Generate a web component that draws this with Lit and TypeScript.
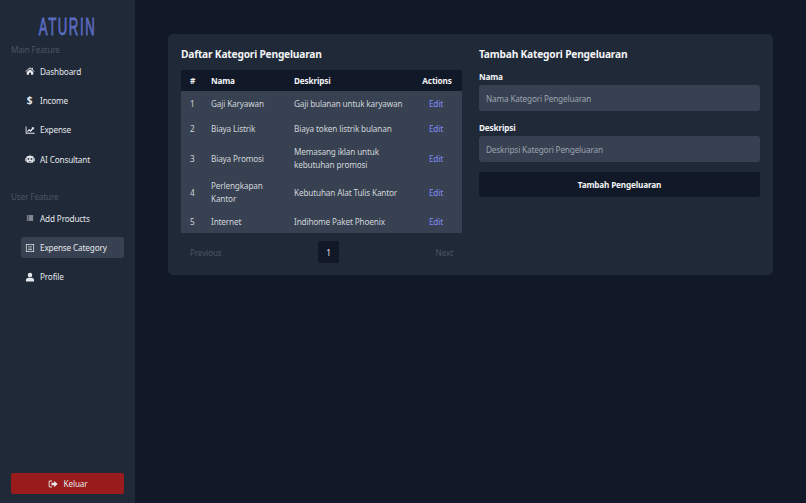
import { LitElement, html, css, svg } from "lit";
import { customElement } from "lit/decorators.js";

const icons: Record<string, any> = {
  home: svg`<path d="M8 2 .6 8.200l.8.9L8 3.600l6.600 5.500.8-.9-2.900-2.400V2.600h-1.800v1.700L8 2Z"/><path d="M2.800 9.600 8 5.300l5.200 4.300V14H9.600v-3.300H6.400V14H2.800V9.600Z"/>`,
  chart: svg`<path d="M1 2.500h1.500v10H15.500V14H1V2.500Z"/><path d="M3.800 9.500 6.400 6.300l2.200 1.800 2.800-3.300-1.100-1.100H14.500v3.800l-1.200-1.200-4.400 4.800-2.300-1.900-1.800 2.100H3.800V9.500Z"/>`,
  robot: svg`<path d="M7.300 1.200h1.400v2h2.600A2.700 2.700 0 0 1 14 5.900v5.400A2.700 2.700 0 0 1 11.300 14H4.700A2.700 2.700 0 0 1 2 11.300V5.900a2.700 2.700 0 0 1 2.700-2.700h2.600v-2ZM5.600 6.500a1.400 1.400 0 1 0 0 2.800 1.400 1.400 0 0 0 0-2.800Zm4.800 0a1.400 1.400 0 1 0 0 2.800 1.400 1.400 0 0 0 0-2.800ZM5.500 11v1h5v-1h-5Z"/><path d="M.3 6.800H1.500v4.700H.3zM14.500 6.800h1.200v4.700h-1.200z"/>`,
  list: svg`<path d="M3 4h1.600v1.600H3zM5.600 4H13v1.600H5.600zM3 7.200h1.600v1.600H3zM5.600 7.200H13v1.600H5.600zM3 10.400h1.600V12H3zM5.600 10.400H13V12H5.600z"/>`,
  book: svg`<path fill-rule="evenodd" d="M1.500 1.500h13v13h-13v-13Zm1.200 1.200v10.600h10.600V2.700H2.700Z"/><path d="M5 5h6v1H5zM5 7.500h6v1H5zM5 10h6v1H5z"/>`,
  user: svg`<circle cx="8" cy="4.600" r="3.600"/><path d="M1.500 15v-2.200C1.500 10.400 3.400 9 5.500 9h5c2.100 0 4 1.400 4 3.800V15h-13Z"/>`,
  out: svg`<path d="M6.500 2.500H3.300A2.300 2.300 0 0 0 1 4.800v6.400a2.300 2.300 0 0 0 2.300 2.300h3.200v-1.500H3.300a.8.8 0 0 1-.8-.8V4.800c0-.44.36-.8.8-.8h3.200V2.500Z"/><path d="M9.800 3 15.500 8l-5.700 5v-3H5.500V6h4.300V3Z"/>`,
};

const ico = (n: string) => html`<svg class="ico" viewBox="0 0 16 16" fill="currentColor">${icons[n]}</svg>`;

const rows = [
  ["1", "Gaji Karyawan", "Gaji bulanan untuk karyawan"],
  ["2", "Biaya Listrik", "Biaya token listrik bulanan"],
  ["3", "Biaya Promosi", "Memasang iklan untuk kebutuhan promosi"],
  ["4", "Perlengkapan Kantor", "Kebutuhan Alat Tulis Kantor"],
  ["5", "Internet", "Indihome Paket Phoenix"],
];

@customElement("app-root")
export class AppRoot extends LitElement {
  static styles = css`
    :host {
      display: flex;
      width: 806px;
      height: 503px;
      background: #111827;
      color: #e5e7eb;
      font-family: "Noto Sans", sans-serif;
      font-size: 8.200px;
      letter-spacing: -0.150px;
      overflow: hidden;
    }
    .side {
      width: 135px;
      flex: none;
      background: #1f2937;
      display: flex;
      flex-direction: column;
      box-sizing: border-box;
      padding: 14px 11px 9px;
    }
    .logo {
      font-family: "Liberation Sans", sans-serif;
      font-size: 23.500px;
      font-weight: 400;
      line-height: 26px;
      letter-spacing: 2.800px;
      color: #5c6bc0;
      text-align: center;
      transform: scaleX(0.56);
      -webkit-text-stroke: 0.8px #5c6bc0;
    }
    .sec { color: #4b5563; line-height: 13px; margin-top: 3px; }
    .sec.two { margin-top: 21px; }
    nav { display: flex; flex-direction: column; gap: 9px; margin: 5px 0 0 10px; }
    .sec.two + nav { margin-top: 5px; }
    .item {
      display: flex;
      align-items: center;
      gap: 5px;
      height: 20.300px;
      padding-left: 3px;
      border-radius: 2px;
      color: #e5e7eb;
    }
    .item.on { background: #374151; }
    .ico { width: 10px; height: 10px; flex: none; }
    .icw { width: 11px; display: flex; justify-content: center; flex: none; }
    .dollar { font-weight: 700; font-size: 10px; line-height: 10px; }
    .logout {
      margin-top: auto;
      height: 21px;
      background: #991b1b;
      border-radius: 2px;
      display: flex;
      align-items: center;
      justify-content: center;
      gap: 6px;
      color: #e5e7eb;
    }
    main { flex: 1; padding: 34px 33px 0; min-width: 0; }
    .card {
      width: 605px;
      height: 241px;
      box-sizing: border-box;
      background: #1f2937;
      border-radius: 5px;
      padding: 13px;
      display: grid;
      grid-template-columns: 281px 281px;
      column-gap: 17px;
    }
    h2 {
      margin: 0;
      font-size: 10.200px;
      letter-spacing: -0.200px;
      line-height: 15px;
      font-weight: 700;
      color: #f3f4f6;
    }
    .tbl {
      margin-top: 8px;
      display: grid;
      grid-template-columns: 30px 83px 1fr 52px;
      grid-template-rows: 21px 25px 25px 34px 34px 24px;
      background: #374151;
      line-height: 13px;
    }
    .h { background: #111827; display: flex; align-items: center; font-weight: 700; color: #f3f4f6; }
    .c { display: flex; align-items: center; color: #d1d5db; }
    .c.pad { padding-right: 6px; }
    .p1 { padding-left: 9px; }
    .c.n { padding-right: 10px; }
    .act { justify-content: center; color: #818cf8; }
    .hact { justify-content: center; padding-left: 2px; }
    .pager {
      display: flex;
      justify-content: space-between;
      align-items: center;
      margin-top: 8px;
      padding: 0 9px;
      color: #4b5563;
    }
    .pg {
      width: 21px;
      height: 22px;
      background: #111827;
      border-radius: 2px;
      color: #e5e7eb;
      display: flex;
      align-items: center;
      justify-content: center;
    }
    label { display: block; font-weight: 700; color: #f3f4f6; line-height: 13px; margin-top: 8px; }
    .f2 { margin-top: 10px; }
    .inp {
      margin-top: 2px;
      height: 26px;
      background: #374151;
      border-radius: 3px;
      display: flex;
      align-items: center;
      padding: 0 7px;
      color: #9ca3af;
    }
    .btn {
      margin-top: 10px;
      height: 25px;
      background: #111827;
      border-radius: 3px;
      display: flex;
      align-items: center;
      justify-content: center;
      font-weight: 700;
      color: #f3f4f6;
    }
  `;

  private item(icon: any, label: string, on = false) {
    return html`<div class="item ${on ? "on" : ""}"><span class="icw">${icon}</span><span>${label}</span></div>`;
  }

  render() {
    return html`
      <aside class="side">
        <div class="logo">ATURIN</div>
        <div class="sec">Main Feature</div>
        <nav>
          ${this.item(ico("home"), "Dashboard")}
          ${this.item(html`<span class="dollar">$</span>`, "Income")}
          ${this.item(ico("chart"), "Expense")}
          ${this.item(ico("robot"), "AI Consultant")}
        </nav>
        <div class="sec two">User Feature</div>
        <nav>
          ${this.item(ico("list"), "Add Products")}
          ${this.item(ico("book"), "Expense Category", true)}
          ${this.item(ico("user"), "Profile")}
        </nav>
        <div class="logout">${ico("out")}<span>Keluar</span></div>
      </aside>
      <main>
        <section class="card">
          <div>
            <h2>Daftar Kategori Pengeluaran</h2>
            <div class="tbl">
              <div class="h p1">#</div><div class="h">Nama</div><div class="h">Deskripsi</div><div class="h hact">Actions</div>
              ${rows.map(
                (r) => html`
                  <div class="c p1">${r[0]}</div>
                  <div class="c n">${r[1]}</div>
                  <div class="c pad">${r[2]}</div>
                  <div class="c act">Edit</div>
                `
              )}
            </div>
            <div class="pager">
              <span>Previous</span>
              <span class="pg">1</span>
              <span>Next</span>
            </div>
          </div>
          <div>
            <h2>Tambah Kategori Pengeluaran</h2>
            <label>Nama</label>
            <div class="inp">Nama Kategori Pengeluaran</div>
            <label class="f2">Deskripsi</label>
            <div class="inp">Deskripsi Kategori Pengeluaran</div>
            <div class="btn">Tambah Pengeluaran</div>
          </div>
        </section>
      </main>
    `;
  }
}
